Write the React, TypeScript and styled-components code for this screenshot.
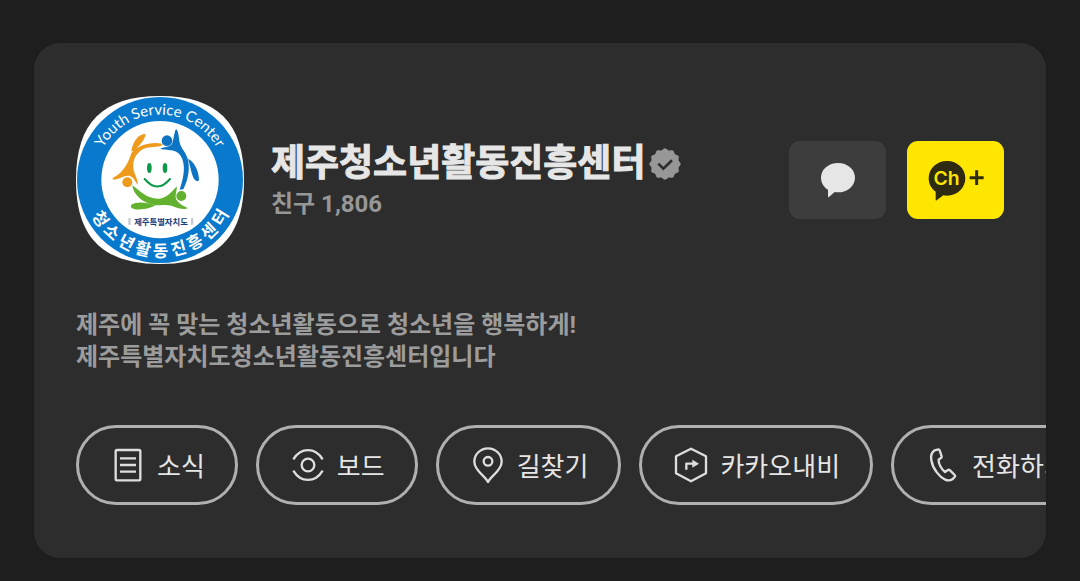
import React from "react";
import styled, { createGlobalStyle } from "styled-components";

const fontStack = `Roboto, "Noto Sans CJK KR", sans-serif`;

const GlobalStyle = createGlobalStyle`
  *, *::before, *::after { box-sizing: border-box; }
  body {
    margin: 0;
    background: #1f1f1f;
    font-family: ${fontStack};
  }
`;

const Page = styled.main`
  padding: 43px 34px 23px;
`;

const Card = styled.article`
  padding: 53px 0 53px 42px;
  overflow: hidden;
  border-radius: 26px;
  background: #2d2d2d;
  box-shadow: 0 0 8px rgba(0, 0, 0, 0.12);
`;

const Header = styled.header`
  display: flex;
  align-items: center;
  padding-right: 42px;
`;

const Avatar = styled.svg`
  flex: none;
  width: 168px;
  height: 168px;
  margin-right: 27px;
`;

const Identity = styled.div`
  flex: 1;
  min-width: 0;
`;

const TitleRow = styled.div`
  display: flex;
  align-items: center;
  gap: 4px;
`;

const Title = styled.h1`
  margin: 0;
  color: #e6e6e6;
  font-size: 37px;
  font-weight: 700;
  line-height: 48px;
  white-space: nowrap;
  -webkit-text-stroke: 1px #e6e6e6;
`;

const Badge = styled.svg`
  flex: none;
  width: 32px;
  height: 32px;
`;

const Friends = styled.p`
  margin: 0;
  color: #979797;
  font-size: 24px;
  font-weight: 700;
  line-height: 32px;
`;

const Actions = styled.div`
  display: flex;
  gap: 21px;
`;

const ActionButton = styled.button<{ $primary?: boolean }>`
  display: flex;
  align-items: center;
  justify-content: center;
  width: 97px;
  height: 78px;
  padding: 0;
  border: 0;
  border-radius: 11px;
  background: ${(p) => (p.$primary ? "#ffe600" : "#3d3d3d")};
  cursor: pointer;
`;

const Description = styled.p`
  margin: 45px 42px 52px 0;
  color: #9c9c9c;
  font-size: 24px;
  font-weight: 700;
  line-height: 32px;
`;

const Shortcuts = styled.nav`
  display: flex;
  gap: 18px;
  overflow-x: auto;
  scrollbar-width: none;
`;

const Chip = styled.button`
  display: flex;
  flex: none;
  align-items: center;
  gap: 11px;
  height: 80px;
  padding: 0 30px 0 31px;
  border: 3px solid #b0b0b0;
  border-radius: 40px;
  background: transparent;
  color: #e6e6e6;
  font-family: ${fontStack};
  font-size: 26px;
  line-height: 36px;
  white-space: nowrap;
  cursor: pointer;
`;

const ChipLabel = styled.span`
  padding-top: 3px;
`;

const ChipIcon = styled.svg`
  flex: none;
  width: 36px;
  height: 36px;
  fill: none;
  stroke: #dedede;
  stroke-width: 7;
  stroke-linejoin: round;
`;

const CENTER = 270;
const SEAL_FONT = 50;
const SEAL_RADIUS = 231;
const sealText = "청소년활동진흥센터";

// Each syllable sits upright on the lower half of the ring.
const sealGlyphs = Array.from(sealText).map((_, i) => {
  const deg = 57 - i * 14.4;
  const rad = (deg * Math.PI) / 180;
  const half = SEAL_FONT * 0.46;
  const x = CENTER - Math.sin(rad) * SEAL_RADIUS - Math.cos(rad) * half;
  const y = CENTER + Math.cos(rad) * SEAL_RADIUS - Math.sin(rad) * half;
  return { x: Math.round(x), y: Math.round(y), deg };
});

const CenterLogo = () => (
  <Avatar viewBox="18 18 504 504" role="img" aria-label="제주청소년활동진흥센터 로고">
    <path
      fill="#fff"
      d="M270 18C442 18 522 98 522 270S442 522 270 522 18 442 18 270 98 18 270 18Z"
    />
    <circle cx="270" cy="270" r="249" fill="#0879cc" />
    <circle cx="270" cy="269" r="176" fill="#fff" />
    <path id="ring-top" d="M74 270A196 196 0 0 1 466 270" fill="none" />
    <text fill="#fff" fontFamily="Lato, sans-serif" fontSize="45" textAnchor="middle">
      <textPath href="#ring-top" startOffset="50%">
        Youth Service Center
      </textPath>
    </text>
    <text
      fill="#fff"
      fontFamily='"Noto Sans CJK KR", sans-serif'
      fontWeight="700"
      fontSize={SEAL_FONT}
      x={sealGlyphs.map((g) => g.x).join(" ")}
      y={sealGlyphs.map((g) => g.y).join(" ")}
      rotate={sealGlyphs.map((g) => g.deg).join(" ")}
    >
      {sealText}
    </text>
    <g fill="#ee9a1c">
      <path d="M227 132C205 132 188 154 184 184L195 182C204 168 224 154 227 132Z" />
      <path d="M277 161C243 155 204 164 184 190C178 208 170 230 150 249C141 258 129 261 127 268C142 273 163 253 180 258C190 262 196 275 203 284C205 270 194 255 191 240C186 214 196 190 220 177C240 169 262 173 277 166Z" />
      <circle cx="172" cy="277" r="15" />
    </g>
    <g fill="#0d74c4">
      <circle cx="291" cy="152" r="16" />
      <path d="M318 117C312 128 311 150 306 162C298 172 283 170 271 176C290 184 318 174 331 196C350 226 340 264 329 299L340 298C356 266 361 230 352 203C345 182 330 172 328 152C326 138 325 122 318 117Z" />
      <path d="M354 206C371 214 387 240 387 270C383 278 373 272 368 258C363 242 359 222 354 206Z" />
    </g>
    <g fill="#62b22f">
      <circle cx="334" cy="318" r="15" />
      <path d="M187 286C191 322 232 347 270 346C295 344 302 347 316 352C330 357 347 359 353 354C338 348 318 336 317 322C316 311 322 299 320 289C308 302 296 320 270 326C232 329 212 304 187 286Z" />
      <path d="M184 344C200 334 230 336 256 346C240 357 198 364 184 353Q181 348 184 344Z" />
    </g>
    <g fill="#0b9a4c">
      <ellipse cx="238" cy="234" rx="7" ry="15" />
      <ellipse cx="285" cy="234" rx="7" ry="15" />
      <path
        d="M224 267Q262 312 300 267"
        fill="none"
        stroke="#0b9a4c"
        strokeWidth="6"
        strokeLinecap="round"
      />
    </g>
    <path d="M175 384H182V404H175ZM363 384H370V404H363Z" fill="#c9cbd0" />
    <text
      x="273"
      y="404"
      fill="#173f7c"
      fontFamily='"Noto Sans CJK KR", sans-serif'
      fontWeight="700"
      fontSize="25"
      textAnchor="middle"
    >
      제주특별자치도
    </text>
  </Avatar>
);

// Scalloped outline with twelve lobes.
const scallop =
  Array.from({ length: 144 }, (_, i) => {
    const a = (i / 144) * Math.PI * 2;
    const r = 44.5 + 2.5 * Math.cos(a * 12);
    const x = 48 + r * Math.sin(a);
    const y = 48 - r * Math.cos(a);
    return `${i ? "L" : "M"}${x.toFixed(1)} ${y.toFixed(1)}`;
  }).join("") + "Z";

const VerifiedBadge = () => (
  <Badge viewBox="0 0 96 96" role="img" aria-label="인증 채널">
    <path d={scallop} fill="#979797" />
    <path d="M28 47L43 62L69 37" fill="none" stroke="#2d2d2d" strokeWidth="8" />
  </Badge>
);

const shortcuts = [
  {
    label: "소식",
    viewBox: "120 81 108 108",
    art: (
      <>
        <rect x="137" y="90" width="74" height="91" rx="4" />
        <path d="M150 115H198M150 135H198M150 155H198" />
      </>
    ),
  },
  {
    label: "보드",
    viewBox: "660 81 108 108",
    art: (
      <>
        <circle cx="714" cy="135" r="19" />
        <path d="M670 118C692 81 736 81 758 118M670 152C692 189 736 189 758 152" />
      </>
    ),
  },
  {
    label: "길찾기",
    viewBox: "120 81 108 108",
    art: (
      <>
        <path d="M174 186C168 169 133 153 133 125A41 40 0 0 1 215 125C215 153 180 169 174 186Z" />
        <circle cx="174" cy="124" r="13" />
      </>
    ),
  },
  {
    label: "카카오내비",
    viewBox: "732 81 108 108",
    art: (
      <>
        <path d="M786 86L831 109V160L786 184L741 160V109Z" />
        <path d="M772 149V131H793" />
        <path d="M790 119L810 131L790 143Z" fill="#dedede" stroke="none" />
      </>
    ),
  },
  {
    label: "전화하기",
    viewBox: "618 81 108 108",
    art: (
      <path d="M647 91L658 88Q661 88 662 91L668 109Q669 112 666 114L659 119C658 131 667 148 678 156L687 150Q690 148 693 151L707 165Q710 168 707 171L700 178C688 186 670 179 654 158C637 136 628 103 647 91Z" />
    ),
  },
];

export default function App() {
  return (
    <>
      <GlobalStyle />
      <Page>
        <Card>
          <Header>
            <CenterLogo />
            <Identity>
              <TitleRow>
                <Title>제주청소년활동진흥센터</Title>
                <VerifiedBadge />
              </TitleRow>
              <Friends>친구 1,806</Friends>
            </Identity>
            <Actions>
              <ActionButton type="button" aria-label="채팅하기">
                <svg width="35" height="35" viewBox="120 99 105 105" aria-hidden="true">
                  <path
                    fill="#e6e6e6"
                    d="M174 99C202 99 225 118 225 143S202 187 174 187Q169 187 164 186L147 201Q144 203 144 199V179C131 171 123 158 123 143C123 118 146 99 174 99Z"
                  />
                </svg>
              </ActionButton>
              <ActionButton type="button" $primary aria-label="채널 추가">
                <svg width="56" height="42" viewBox="442 90 168 126" aria-hidden="true">
                  <path
                    fill="#2f2b12"
                    d="M499 96C530 96 554 119 554 148S530 200 499 200Q493 200 488 199L468 214Q465 216 465 212V188C452 179 444 165 444 148C444 119 468 96 499 96Z"
                  />
                  <text
                    x="498"
                    y="168"
                    fill="#ffe600"
                    fontFamily="Inter, sans-serif"
                    fontWeight="600"
                    fontSize="58"
                    textAnchor="middle"
                  >
                    Ch
                  </text>
                  <path d="M567 146H609M588 124V168" stroke="#2f2b12" strokeWidth="9" />
                </svg>
              </ActionButton>
            </Actions>
          </Header>
          <Description>
            제주에 꼭 맞는 청소년활동으로 청소년을 행복하게!
            <br />
            제주특별자치도청소년활동진흥센터입니다
          </Description>
          <Shortcuts aria-label="바로가기">
            {shortcuts.map((s) => (
              <Chip key={s.label} type="button">
                <ChipIcon viewBox={s.viewBox} aria-hidden="true">
                  {s.art}
                </ChipIcon>
                <ChipLabel>{s.label}</ChipLabel>
              </Chip>
            ))}
          </Shortcuts>
        </Card>
      </Page>
    </>
  );
}
